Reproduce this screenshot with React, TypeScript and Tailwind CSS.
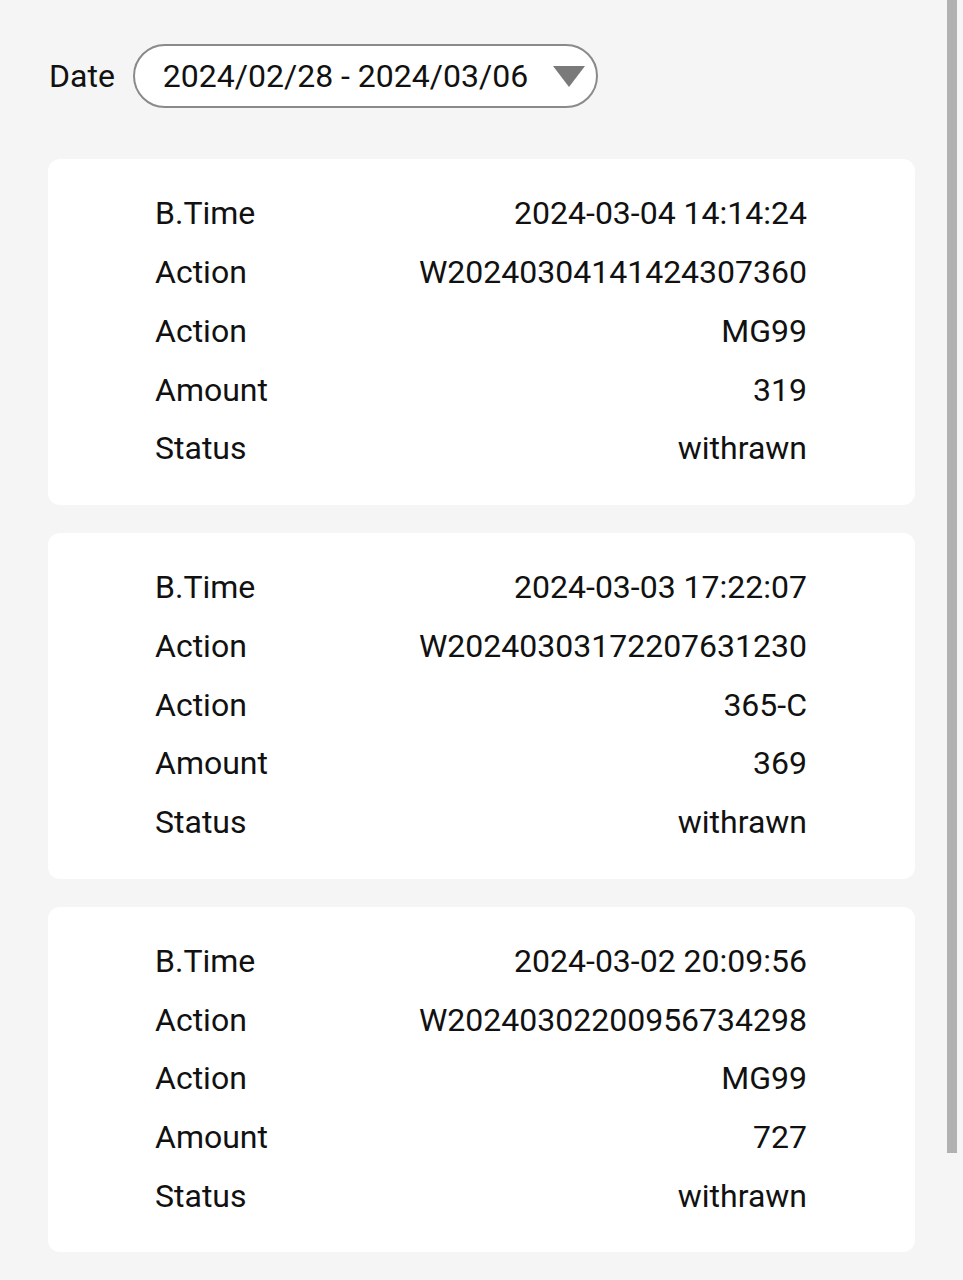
import React from "react";

type Rec = { time: string; id: string; game: string; amount: string; status: string };

const records: Rec[] = [
  { time: "2024-03-04 14:14:24", id: "W20240304141424307360", game: "MG99", amount: "319", status: "withrawn" },
  { time: "2024-03-03 17:22:07", id: "W20240303172207631230", game: "365-C", amount: "369", status: "withrawn" },
  { time: "2024-03-02 20:09:56", id: "W20240302200956734298", game: "MG99", amount: "727", status: "withrawn" },
];

function Row({ label, value }: { label: string; value: string }) {
  return (
    <div className="flex h-[58.75px] items-center justify-between">
      <span>{label}</span>
      <span>{value}</span>
    </div>
  );
}

export default function App() {
  return (
    <div
      className="relative min-h-[1280px] w-[963px] overflow-hidden bg-[#f5f5f5] text-[#111111]"
      style={{ fontFamily: "Roboto, 'Noto Sans', sans-serif" }}
    >
      <div className="w-[963px] pl-[48px] pr-[48px] pt-[44px]">
        <div className="flex items-center">
          <span className="ml-[1px] text-[32px] leading-none">Date</span>
          <div className="ml-[18px] flex h-[64px] w-[465px] shrink-0 items-center rounded-full border-2 border-[#8a8a8a] bg-white pl-[28px] pr-[12px]">
            <span className="whitespace-nowrap text-[32px] leading-none">2024/02/28 - 2024/03/06</span>
            <svg className="ml-[25px] shrink-0" width="32" height="21" viewBox="0 0 32 21">
              <polygon points="0,0 32,0 16,21" fill="#7a7a7a" />
            </svg>
          </div>
        </div>

        <div className="mt-[51px] flex flex-col gap-[28px]">
          {records.map((r, i) => (
            <div key={i} className="rounded-[12px] bg-white pb-[27px] pl-[107px] pr-[108px] pt-[25px] text-[32px] leading-none">
              <Row label="B.Time" value={r.time} />
              <Row label="Action" value={r.id} />
              <Row label="Action" value={r.game} />
              <Row label="Amount" value={r.amount} />
              <Row label="Status" value={r.status} />
            </div>
          ))}
        </div>
      </div>
      <div className="absolute right-[6px] top-0 h-[1153px] w-[10px] bg-[#b1b1b1]" />
    </div>
  );
}
